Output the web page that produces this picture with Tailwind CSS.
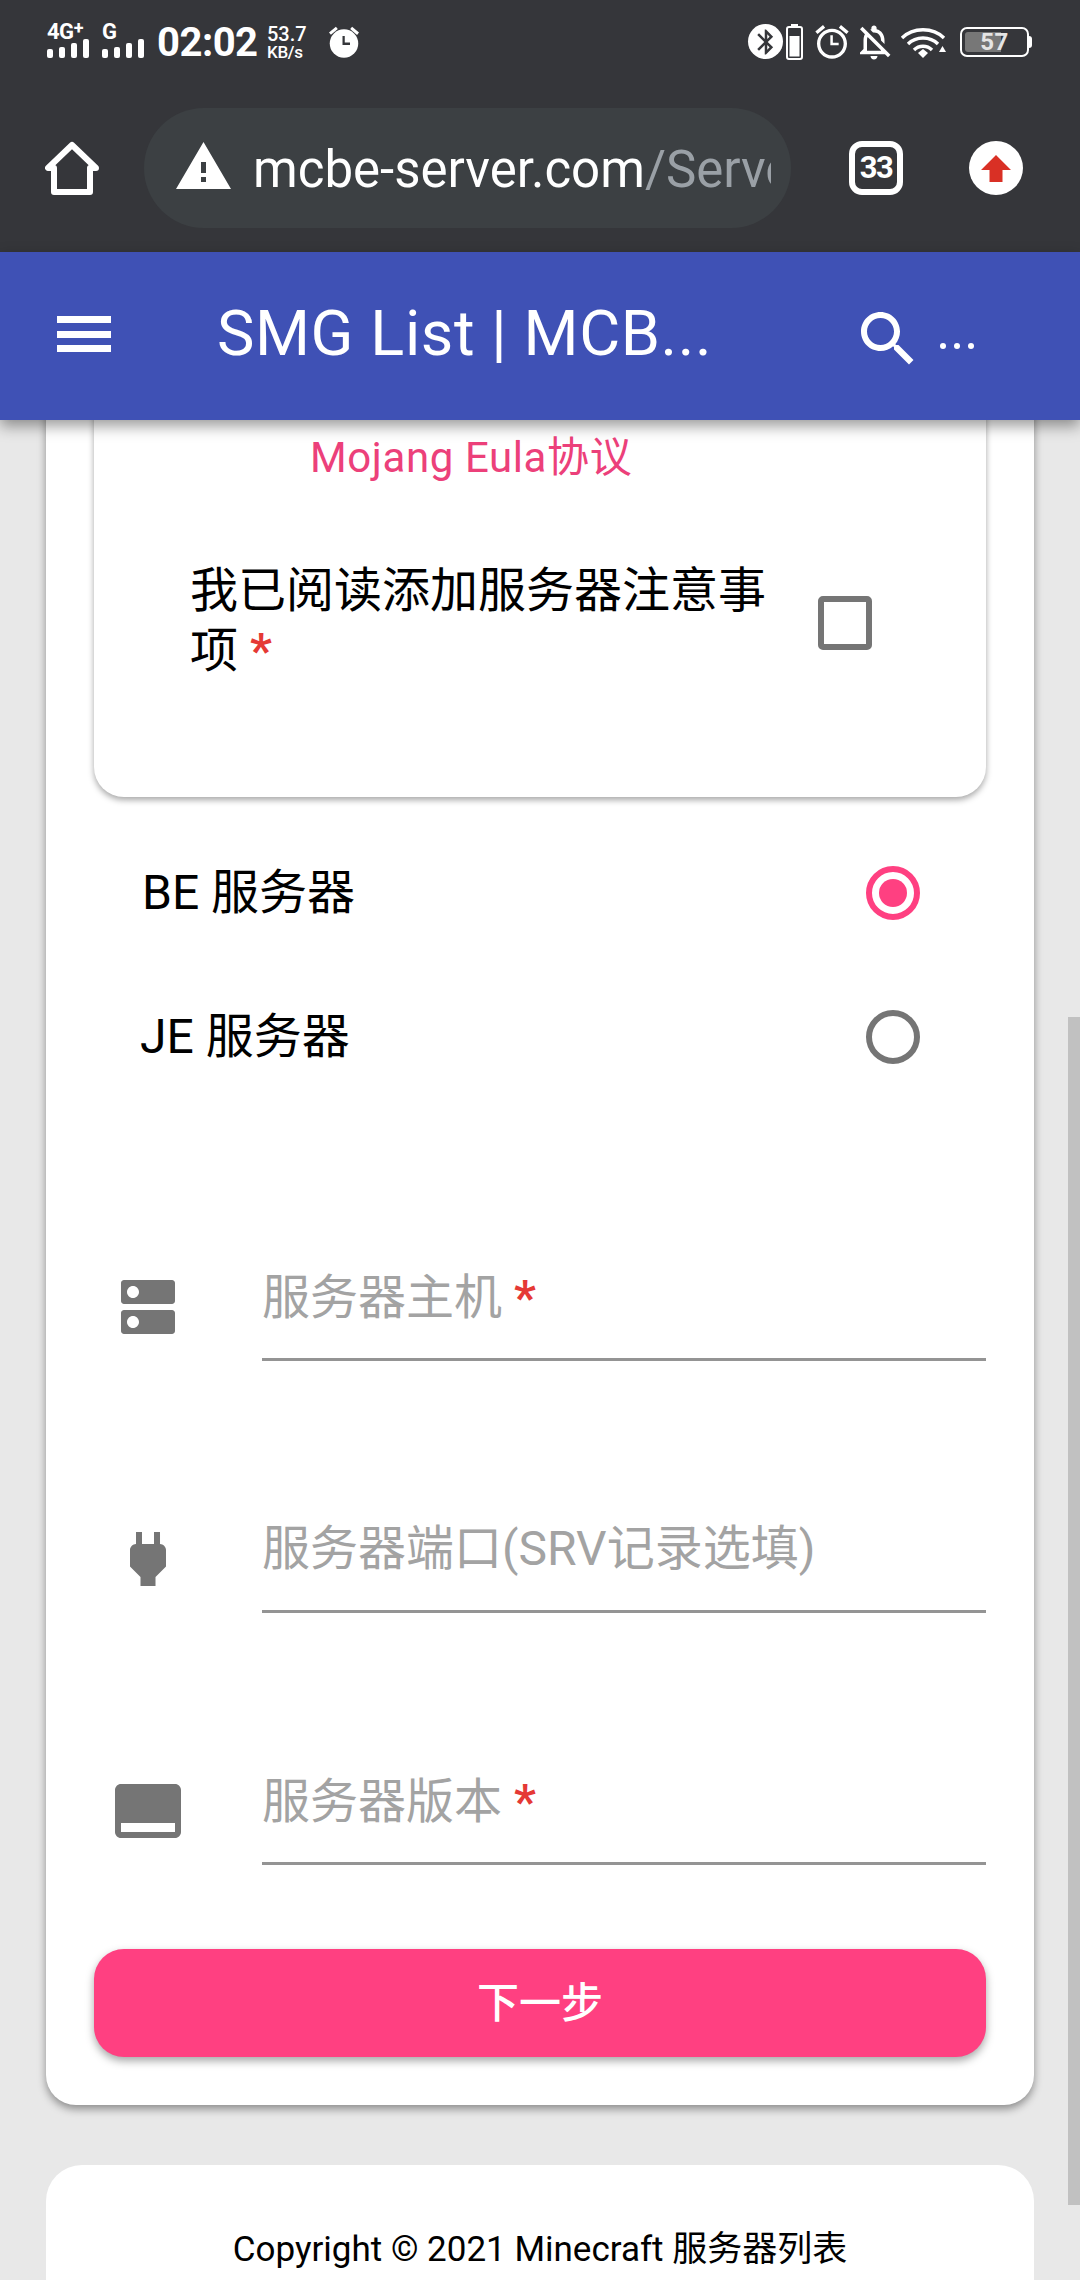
<!DOCTYPE html>
<html lang="en">
<head>
    <meta charset="UTF-8">
    <meta name="viewport" content="width=device-width, initial-scale=1.0">
    <title>SMG List | MCBE</title>
    <script src="https://cdn.jsdelivr.net/npm/@tailwindcss/browser@4"></script>
</head>
<body class="bg-[#e8e8e8]">
<div class="relative w-[1080px] h-[2280px] overflow-hidden flex flex-col bg-[#e8e8e8] font-['Roboto','Noto_Sans_CJK_SC',sans-serif]">

    <!-- Status bar -->
    <div class="h-[100px] bg-[#35363a] flex items-start pt-[24px] pl-[47px] pr-[48px] text-white">
        <div class="w-[42px] flex flex-col">
            <div class="h-[15px] text-[22px] leading-[15px] font-bold tracking-[-0.5px] whitespace-nowrap">4G<span class="text-[18px] leading-[0] align-[5px]">+</span></div>
            <div class="h-[19px] flex items-end justify-between">
                <div class="w-[6px] h-[9px] rounded-[2px] bg-white"></div>
                <div class="w-[6px] h-[11px] rounded-[2px] bg-white"></div>
                <div class="w-[6px] h-[15px] rounded-[2px] bg-white"></div>
                <div class="w-[6px] h-[19px] rounded-[2px] bg-white"></div>
            </div>
        </div>
        <div class="w-[42px] ml-[13px] flex flex-col">
            <div class="h-[15px] text-[22px] leading-[15px] font-bold">G</div>
            <div class="h-[19px] flex items-end justify-between">
                <div class="w-[6px] h-[9px] rounded-[2px] bg-white"></div>
                <div class="w-[6px] h-[11px] rounded-[2px] bg-white"></div>
                <div class="w-[6px] h-[15px] rounded-[2px] bg-white"></div>
                <div class="w-[6px] h-[19px] rounded-[2px] bg-white"></div>
            </div>
        </div>
        <div class="ml-[13px] w-[100px] text-[40px] leading-[36px] font-bold mt-[1px] tracking-[-0.5px]">02:02</div>
        <div class="ml-[10px] w-[42px] flex flex-col font-medium">
            <div class="text-[20px] leading-[18px] mt-[1px]">53.7</div>
            <div class="text-[17px] leading-[16px] mt-[1px] tracking-[-0.3px]">KB/s</div>
        </div>
        <svg class="ml-[17px] w-[36px] h-[36px]" viewBox="0 0 24 24" fill="#fff">
            <path d="M22 5.720l-4.600-3.860-1.290 1.530 4.600 3.860L22 5.720zM7.880 3.390L6.600 1.860 2 5.710l1.290 1.530 4.590-3.850z"/>
            <circle cx="12" cy="13" r="9.500"/>
            <path d="M12.500 8H11v6h5v-1.600h-3.500z" fill="#35363a"/>
        </svg>
        <div class="flex-1"></div>
        <div class="w-[35px] h-[35px] rounded-full bg-white flex items-center justify-center">
            <svg class="w-[30px] h-[30px]" viewBox="0 0 24 24" fill="#35363a">
                <path d="M17.710 7.710L12 2h-1v7.590L6.410 5 5 6.410 10.590 12 5 17.590 6.410 19 11 14.410V22h1l5.710-5.710-4.300-4.290 4.300-4.290zM13 5.830l1.880 1.880L13 9.590V5.830zm1.880 10.460L13 18.170v-3.760l1.880 1.880z"/>
            </svg>
        </div>
        <svg class="ml-[3px] w-[17px] h-[36px]" viewBox="0 0 17 36" fill="none">
            <rect x="5" y="0" width="7" height="3" fill="#fff"/>
            <rect x="1" y="3" width="15" height="32" rx="2" stroke="#fff" stroke-width="2"/>
            <rect x="3.500" y="12" width="10" height="20.500" fill="#fff"/>
        </svg>
        <svg class="ml-[9px] w-[40px] h-[40px] -mt-[2px]" viewBox="0 0 24 24" fill="#fff">
            <path d="M22 5.720l-4.600-3.860-1.290 1.530 4.600 3.860L22 5.720zM7.880 3.390L6.600 1.860 2 5.710l1.290 1.530 4.590-3.850zM12.500 8H11v6h5v-1.500h-3.500V8zM12 4c-4.970 0-9 4.030-9 9s4.030 9 9 9 9-4.030 9-9-4.030-9-9-9zm0 16c-3.870 0-7-3.130-7-7s3.130-7 7-7 7 3.130 7 7-3.130 7-7 7z"/>
        </svg>
        <svg class="ml-[1px] w-[42px] h-[42px] -mt-[3px]" viewBox="0 0 24 24" fill="#fff">
            <path d="M12 22c1.100 0 2-.9 2-2h-4c0 1.100.9 2 2 2zm0-15.500c2.490 0 4 2.020 4 4.500v.1l2 2V11c0-3.070-1.630-5.640-4.500-6.320V4c0-.83-.67-1.500-1.500-1.500s-1.500.67-1.500 1.500v.68c-.24.06-.47.15-.69.23l1.640 1.640c.18-.02.36-.05.55-.05zM5.410 3.350L4 4.760l2.810 2.810C6.290 8.570 6 9.740 6 11v5l-2 2v1h14.240l1.740 1.740 1.410-1.410L5.410 3.350zM16 17H8v-6c0-.68.12-1.320.34-1.900L16 16.760V17z"/>
        </svg>
        <svg class="ml-[5px] mt-[3px] w-[46px] h-[32px]" viewBox="0 0 46 32" fill="none" stroke="#fff" stroke-width="3.400">
            <path d="M2 11C13 0 33 0 44 11"/>
            <path d="M8 17C16 9 30 9 38 17"/>
            <path d="M14 23C19 18 27 18 32 23"/>
            <path d="M18 26l5-4 5 4-5 5z" fill="#fff" stroke="none"/>
            <path d="M39 25h7l-3.500-6z" fill="#fff" stroke="none"/>
        </svg>
        <div class="ml-[14px] mt-[3px] flex items-center">
            <div class="w-[69px] h-[30px] rounded-[7px] border-2 border-white p-[3px] relative">
                <div class="w-[36px] h-full rounded-l-[3px] bg-[#777777]"></div>
                <div class="absolute inset-0 text-[24px] leading-[26px] font-bold text-[#e4e4e4] tracking-[0.5px] text-center">57</div>
            </div>
            <div class="w-[3px] h-[12px] rounded-r-[3px] bg-white"></div>
        </div>
    </div>

    <!-- Browser toolbar -->
    <div class="h-[152px] bg-[#35363a] flex items-start pl-[45px] pt-[8px] text-white">
        <svg class="mt-[33px] w-[54px] h-[54px]" viewBox="0 0 54 54" fill="none" stroke="#fff" stroke-width="6" stroke-linejoin="round">
            <path d="M9 51H45V27H51L27 4 3 27H9Z"/>
        </svg>
        <div class="ml-[45px] w-[647px] h-[120px] rounded-full bg-[#3c4043] flex items-center pl-[32px] pr-[20px]">
            <svg class="w-[55px] h-[47px] shrink-0 -mt-[6px]" viewBox="0 0 55 47">
                <path fill-rule="evenodd" fill="#fff" d="M27.500 0L55 47H0ZM25 20v11h5V20ZM25 35v5h5v-5Z"/>
            </svg>
            <div class="ml-[22px] flex-1 overflow-hidden whitespace-nowrap text-[51px] leading-[60px] mt-[4px]">mcbe-server.com<span class="text-[#9aa0a6]">/ServerAdd</span></div>
        </div>
        <div class="ml-[58px] mt-[33px] w-[54px] h-[54px] rounded-[13px] border-[6px] border-white flex items-center justify-center text-[31px] font-bold tracking-[-1.5px]">33</div>
        <div class="ml-[66px] mt-[33px] w-[54px] h-[54px] rounded-full bg-white flex items-center justify-center">
            <svg class="w-[30px] h-[27px]" viewBox="0 0 30 27"><path fill="#d93025" d="M15 0L30 15H21.500V27H8.500V15H0Z"/></svg>
        </div>
    </div>

    <!-- App bar -->
    <div class="relative z-10 h-[168px] bg-[#3f51b5] shadow-[0_6px_14px_rgba(0,0,0,0.4)] text-white flex items-center pl-[57px]">
        <div class="w-[54px] flex flex-col gap-[7.500px] -mt-[4px]">
            <div class="h-[7px] bg-white"></div>
            <div class="h-[7px] bg-white"></div>
            <div class="h-[7px] bg-white"></div>
        </div>
        <div class="ml-[106px] w-[500px] text-[63px] leading-[72px] -mt-[4px] tracking-[0.6px] whitespace-nowrap overflow-hidden">SMG List | MCB...</div>
        <svg class="ml-[135px] mt-[6px] w-[72px] h-[72px]" viewBox="0 0 24 24" fill="#fff">
            <path d="M15.500 14h-.79l-.28-.27C15.410 12.590 16 11.110 16 9.500 16 5.910 13.090 3 9.500 3S3 5.910 3 9.500 5.910 16 9.500 16c1.610 0 3.090-.59 4.230-1.570l.27.28v.79l5 4.990L20.490 19l-4.990-5zm-6 0C7.010 14 5 11.990 5 9.500S7.010 5 9.500 5 14 7.010 14 9.500 11.990 14 9.500 14z"/>
        </svg>
        <div class="ml-[16px] mt-[20px] flex gap-[8px]">
            <div class="w-[6px] h-[6px] rounded-full bg-white"></div>
            <div class="w-[6px] h-[6px] rounded-full bg-white"></div>
            <div class="w-[6px] h-[6px] rounded-full bg-white"></div>
        </div>
    </div>

    <!-- Page -->
    <div class="flex-1 min-h-0 px-[46px]">
        <!-- Form card -->
        <div class="-mt-[40px] bg-white rounded-[30px] shadow-[0_4px_8px_rgba(0,0,0,0.4)] pb-[48px]">
            <div class="mx-[48px] bg-white rounded-[30px] shadow-[0_3px_6px_rgba(0,0,0,0.35)] pt-[48px] pb-[116px]">
                <div class="pl-[216px] text-[42px] leading-[60px] tracking-[0.6px] text-[#ec407a]">Mojang Eula协议</div>
                <div class="mt-[73px] pl-[96px] pr-[114px] flex items-center justify-between">
                    <div class="w-[580px] text-[48px] leading-[60px] text-black">我已阅读添加服务器注意事项 <span class="font-bold text-[#e53935]">*</span></div>
                    <div class="w-[54px] h-[54px] mt-[3px] shrink-0 rounded-[5px] border-[6px] border-[#757575]"></div>
                </div>
            </div>

            <div class="mt-[24px] pl-[96px] pr-[114px] text-black text-[48px]">
                <div class="h-[144px] flex items-center justify-between">
                    <span>BE 服务器</span>
                    <div class="w-[54px] h-[54px] rounded-full border-[6px] border-[#ff4081] flex items-center justify-center">
                        <div class="w-[28px] h-[28px] rounded-full bg-[#ff4081]"></div>
                    </div>
                </div>
                <div class="h-[144px] flex items-center justify-between">
                    <span class="-ml-[2px]">JE 服务器</span>
                    <div class="w-[54px] h-[54px] rounded-full border-[6px] border-[#757575]"></div>
                </div>
            </div>

            <div class="h-[252px] flex items-end pl-[66px] pr-[48px]">
                <svg class="w-[72px] h-[72px] mb-[18px] fill-[#757575]" viewBox="0 0 24 24">
                    <path d="M20 13H4c-.55 0-1 .45-1 1v6c0 .55.45 1 1 1h16c.55 0 1-.45 1-1v-6c0-.55-.45-1-1-1zM7 19c-1.100 0-2-.9-2-2s.9-2 2-2 2 .9 2 2-.9 2-2 2zM20 3H4c-.55 0-1 .45-1 1v6c0 .55.45 1 1 1h16c.55 0 1-.45 1-1V4c0-.55-.45-1-1-1zM7 9c-1.100 0-2-.9-2-2s.9-2 2-2 2 .9 2 2-.9 2-2 2z"/>
                </svg>
                <div class="ml-[78px] flex-1 border-b-[3px] border-[#949494] pb-[30px] text-[48px] leading-[60px] text-[#a3a3a3]">服务器主机 <span class="font-bold text-[#e53935]">*</span></div>
            </div>
            <div class="h-[252px] flex items-end pl-[66px] pr-[48px]">
                <svg class="w-[72px] h-[72px] mb-[18px] fill-[#757575]" viewBox="0 0 24 24">
                    <path d="M16.010 7L16 3h-2v4h-4V3H8v4h-.01C7 6.990 6 7.990 6 8.990v5.490L9.500 18v3h5v-3l3.500-3.510v-5.500c0-1-1-2-1.990-1.990z"/>
                </svg>
                <div class="ml-[78px] flex-1 border-b-[3px] border-[#949494] pb-[31px] text-[48px] leading-[60px] text-[#a3a3a3]">服务器端口(SRV记录选填)</div>
            </div>
            <div class="h-[252px] flex items-end pl-[66px] pr-[48px]">
                <svg class="w-[72px] h-[72px] mb-[18px] fill-[#757575]" viewBox="0 0 24 24">
                    <path d="M21 3H3c-1.100 0-2 .9-2 2v14c0 1.100.9 2 2 2h18c1.100 0 2-.9 2-2V5c0-1.100-.9-2-2-2zm0 16H3v-3h18v3z"/>
                </svg>
                <div class="ml-[78px] flex-1 border-b-[3px] border-[#949494] pb-[30px] text-[48px] leading-[60px] text-[#a3a3a3]">服务器版本 <span class="font-bold text-[#e53935]">*</span></div>
            </div>

            <div class="mt-[84px] mx-[48px] h-[108px] rounded-[30px] bg-[#ff4081] shadow-[0_4px_8px_rgba(0,0,0,0.35)] flex items-center justify-center text-white text-[42px] font-medium">下一步</div>
        </div>

        <!-- Footer card -->
        <div class="mt-[60px] h-[300px] bg-white rounded-[36px] pt-[60px] text-center text-black text-[35px] leading-[50px]">Copyright © 2021 Minecraft 服务器列表</div>
    </div>

    <!-- Scrollbar thumb -->
    <div class="absolute right-0 top-[1017px] w-[12px] h-[1188px] bg-[#c1c1c1]"></div>
</div>
</body>
</html>
